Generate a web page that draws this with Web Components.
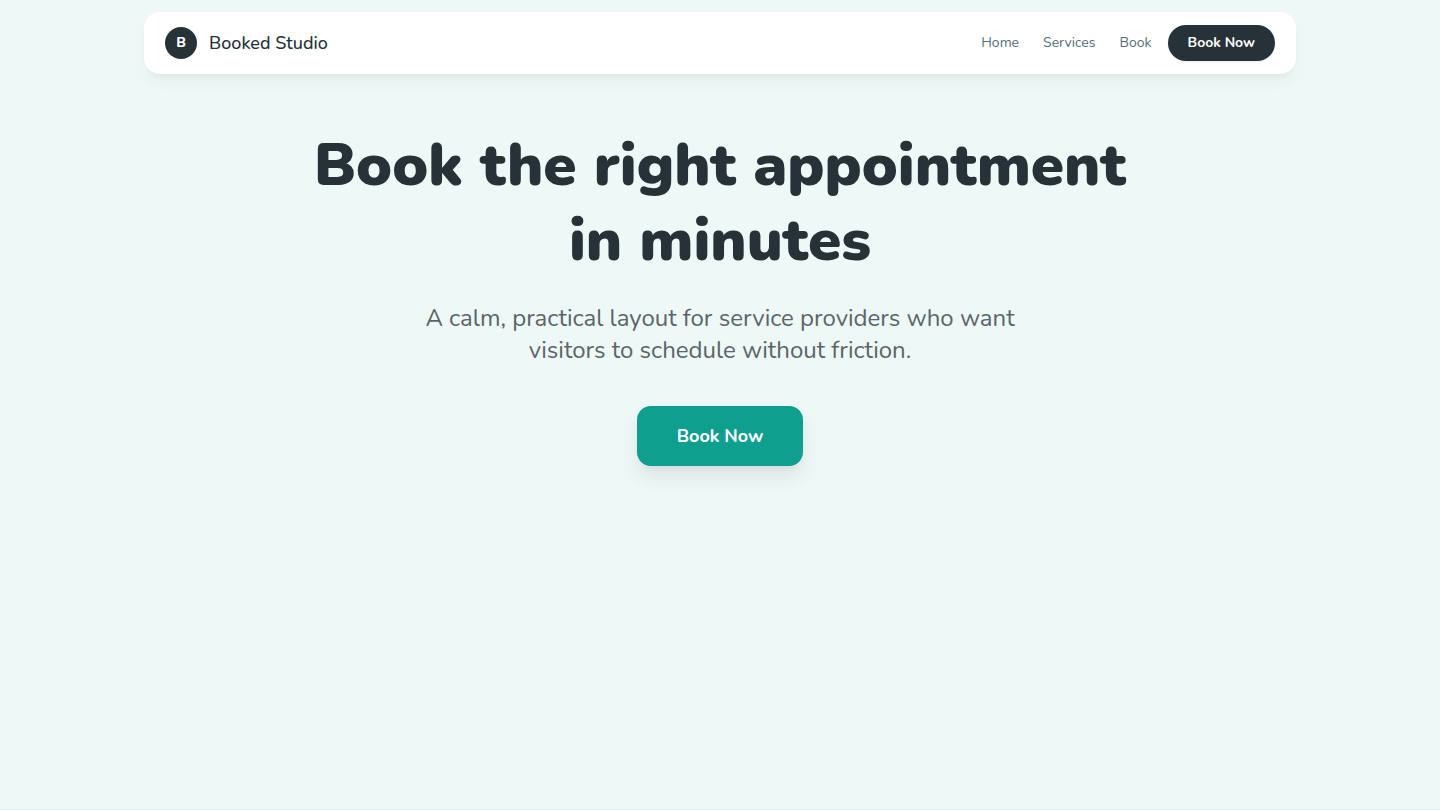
<!DOCTYPE html>
<html lang="en">
<head>
<meta charset="utf-8">
<meta name="viewport" content="width=device-width, initial-scale=1">
<title>Booked Studio</title>
<style>
  :root {
    --ink: #263238;
    --muted: #546e7a;
    --body: #5b6468;
    --mint: #eef8f7;
    --line: #d9eeea;
    --teal: #0f9f8f;
  }
  body {
    margin: 0;
    background: var(--mint);
    color: var(--ink);
    font-family: Nunito, "Open Sans", "Noto Sans", sans-serif;
  }
</style>
</head>
<body>
<booking-page>
  <site-header slot="header">
    <brand-mark slot="brand" initial="B">Booked Studio</brand-mark>
    <nav-link href="#home">Home</nav-link>
    <nav-link href="#services">Services</nav-link>
    <nav-link href="#book">Book</nav-link>
    <action-button slot="action" variant="pill">Book Now</action-button>
  </site-header>
  <hero-section>
    <span slot="title">Book the right appointment in minutes</span>
    <span slot="lead">A calm, practical layout for service providers who want visitors to schedule without friction.</span>
    <action-button slot="action">Book Now</action-button>
  </hero-section>
</booking-page>

<script>
const define = (name, markup, setup) => {
  const template = document.createElement('template');
  template.innerHTML = markup;
  customElements.define(name, class extends HTMLElement {
    constructor() {
      super();
      this.attachShadow({ mode: 'open' }).append(template.content.cloneNode(true));
    }
    connectedCallback() {
      if (setup) setup(this, this.shadowRoot);
    }
  });
};

define('booking-page', `
  <style>
    :host { display: flex; flex-direction: column; min-height: 100vh; box-sizing: border-box;
      padding-top: 12px; border-bottom: 1px solid var(--line); }
    main { flex: 1; }
  </style>
  <slot name="header"></slot>
  <main><slot></slot></main>
`);

define('site-header', `
  <style>
    :host { display: block; width: 80%; margin: 0 auto; }
    header { display: flex; align-items: center; justify-content: space-between;
      padding: 13px 21px; border-radius: 16px; background: #fff;
      box-shadow: 0 10px 15px -3px rgb(38 50 56 / 5%), 0 4px 6px -2px rgb(38 50 56 / 4%); }
    .side, nav { display: flex; align-items: center; }
    .side { gap: 16px; }
    nav { gap: 24px; }
  </style>
  <header>
    <slot name="brand"></slot>
    <div class="side">
      <nav aria-label="Main"><slot></slot></nav>
      <slot name="action"></slot>
    </div>
  </header>
`);

define('brand-mark', `
  <style>
    :host { display: block; }
    a { display: flex; align-items: center; gap: 12px; color: inherit; text-decoration: none;
      font-size: 18px; font-weight: 500; line-height: 28px; }
    .badge { display: grid; place-items: center; width: 32px; height: 32px; border-radius: 50%;
      background: var(--ink); color: #fff; font-size: 14px; font-weight: 800; line-height: 20px; }
  </style>
  <a href="#home"><span class="badge"></span><span><slot></slot></span></a>
`, (host, root) => {
  root.querySelector('.badge').textContent = host.getAttribute('initial');
});

define('nav-link', `
  <style>
    :host { display: block; }
    a { display: block; color: var(--muted); text-decoration: none; font-size: 14px; line-height: 20px; }
  </style>
  <a><slot></slot></a>
`, (host, root) => {
  root.querySelector('a').setAttribute('href', host.getAttribute('href'));
});

define('action-button', `
  <style>
    :host { display: inline-block; }
    button { display: block; border: 0; padding: 16px 40px; border-radius: 14px; cursor: pointer;
      background: var(--teal); color: #fff; font-family: inherit; font-size: 18px; font-weight: 700;
      line-height: 28px;
      box-shadow: 0 12px 20px -2px rgb(38 50 56 / 10%), 0 4px 6px -4px rgb(38 50 56 / 10%); }
    :host([variant="pill"]) button { padding: 8px 20px; border-radius: 18px; background: var(--ink);
      font-size: 14px; line-height: 20px; box-shadow: 0 1px 2px rgb(38 50 56 / 10%); }
  </style>
  <button type="button"><slot></slot></button>
`);

define('hero-section', `
  <style>
    :host { display: block; }
    section { display: flex; flex-direction: column; align-items: center; padding: 54px 24px; text-align: center; }
    h1 { margin: 0; max-width: 848px; font-size: 60px; line-height: 75px; font-weight: 900; }
    p { margin: 24px 0 40px; max-width: 640px; color: var(--body); font-size: 24px; line-height: 32px; }
  </style>
  <section>
    <h1><slot name="title"></slot></h1>
    <p><slot name="lead"></slot></p>
    <slot name="action"></slot>
  </section>
`);
</script>
</body>
</html>
